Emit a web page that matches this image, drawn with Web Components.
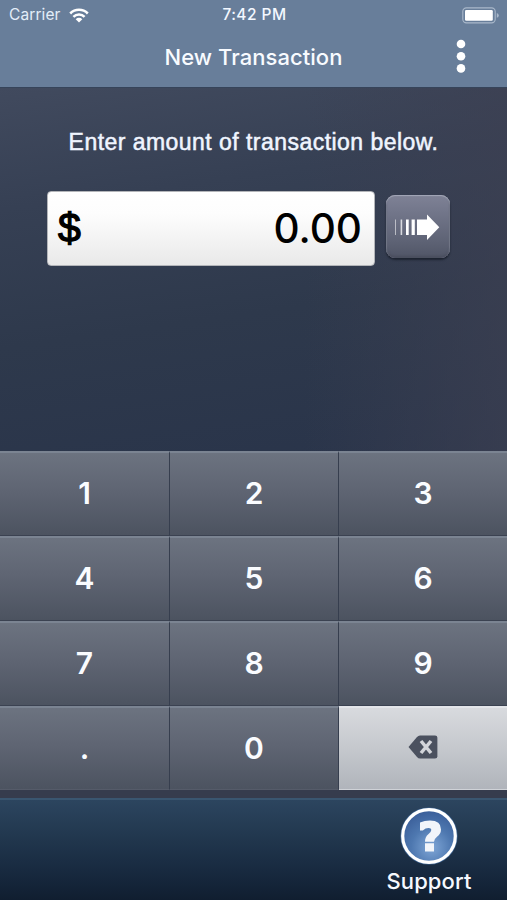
<!DOCTYPE html>
<html lang="en">
<head>
<meta charset="utf-8">
<title>New Transaction</title>
<style>
html, body { margin: 0; height: 100%; }
body { font-family: Inter, "Liberation Sans", sans-serif; color: #fff; overflow: hidden; }
</style>
</head>
<body>
<transaction-app></transaction-app>
<script>
const define = (name, html) => customElements.define(name, class extends HTMLElement {
  constructor() {
    super();
    const t = document.createElement('template');
    t.innerHTML = html;
    this.attachShadow({ mode: 'open' }).append(t.content.cloneNode(true));
  }
});

define('status-bar', `
<style>
:host { display: grid; grid-template-columns: 1fr auto 1fr; align-items: center; height: 30px; padding: 0 8px 0 9px; box-sizing: border-box; font-size: 15.5px; line-height: 30px; }
.left { display: flex; align-items: center; gap: 8px; color: #e3edf8; letter-spacing: .1px; }
.time { font-weight: 500; font-size: 15.5px; letter-spacing: .45px; color: #f3f8ff; padding-left: 1px; }
.batt { justify-self: end; }
svg { display: block; }
</style>
<div class="left"><span>Carrier</span>
<svg width="20" height="15" viewBox="0 0 20 15" fill="none" stroke="#fff" stroke-width="2.5"><path d="M1.2 5.500a12.400 12.400 0 0 1 17.600 0M4.400 8.800a7.900 7.900 0 0 1 11.200 0"/><path d="M6.700 11.200a4.700 4.700 0 0 1 6.600 0L10 14.500Z" fill="#fff" stroke="none"/></svg></div>
<span class="time">7:42 PM</span>
<svg class="batt" width="37" height="17" viewBox="0 0 37 17"><rect x=".8" y=".9" width="32.4" height="15" rx="3.6" fill="none" stroke="#a9b8ca" stroke-width="1.1"/><rect x="3" y="3" width="27.8" height="10.8" rx="1.3" fill="#fff"/><path d="M34.800 6v4.800q2-.8 2-2.400t-2-2.400" fill="#a9b8ca"/></svg>
`);

define('nav-bar', `
<style>
:host { display: grid; grid-template-columns: 1fr auto 1fr; align-items: center; height: 57px; box-sizing: border-box; padding-bottom: 1px; }
h1 { grid-column: 2; margin: -1px 0 0; font-size: 22px; font-weight: 550; line-height: 57px; letter-spacing: .05px; color: #f8fbff; }
svg { justify-self: end; margin: -4px 41px 0 0; }
</style>
<h1><slot></slot></h1>
<svg width="10" height="34" viewBox="0 0 10 34" fill="#fff"><circle cx="5" cy="5" r="4.3"/><circle cx="5" cy="17.2" r="4.3"/><circle cx="5" cy="29.400" r="4.300"/></svg>
`);

define('amount-field', `
<style>
:host { display: flex; justify-content: space-between; align-items: center; width: 328px; height: 75px; box-sizing: border-box; padding: 0 12px 0 10px; border: 1px solid #b3b5b9; border-radius: 4px; background: linear-gradient(#fff, #fdfdfd 30%, #e9e9e9); color: #000; font-size: 40.5px; font-weight: 550; line-height: 73px; }
.sign { font-family: "Liberation Sans", sans-serif; font-weight: 400; font-size: 41px; -webkit-text-stroke: 1.3px #000; }
</style>
<span class="sign">$</span><span><slot></slot></span>
`);

define('go-button', `
<style>
:host { display: block; width: 64px; height: 63px; border-radius: 9px; background: linear-gradient(#7f8296, #73778b 25%, #5d6274 75%, #505566); box-shadow: 0 2px 2px #1d2330, inset 0 1px 1px #a5a8b8, inset 0 -2px 2px #4a4e5e, inset 1px 0 1px #7c8092, inset -1px 0 1px #7c8092; }
svg { display: block; }
</style>
<svg width="64" height="63" viewBox="0 0 64 63" fill="#fff"><path d="M9 24.500h1v15.500H9z" opacity=".55"/><path d="M14.600 24.500h1.600v15.500h-1.600z" opacity=".75"/><path d="M20 24.500h2.700v15.500H20z"/><path d="M25.600 24.500h3.200v15.500h-3.200zM31 24.500h10v-5L53.300 32.200 41 45v-5H31z"/></svg>
`);

define('pad-key', `
<style>
:host { display: flex; align-items: center; justify-content: center; box-sizing: border-box; border-top: 2px solid #7b8492; border-right: 1px solid #363e4e; border-bottom: 1px solid #3b4251; background: linear-gradient(#6c7380, #5f6573 45%, #4c5360); font-size: 30px; font-weight: 560; line-height: 80px; padding-bottom: 2px; color: #fafcff; }
:host([light]) { border-top-color: #e3e5e9; border-right: 0; border-bottom-color: #cfd2d7; background: linear-gradient(#d8dade, #c5c8cd 50%, #b0b4bb); }
:host([edge]) { border-right: 0; }
:host([low]) { border-bottom-color: #555b69; }
</style>
<slot></slot>
`);

define('delete-icon', `
<style>:host { display: block; margin-top: -2px; } svg { display: block; }</style>
<svg width="30" height="24" viewBox="0 0 30 24"><path d="M.5 12 9 2Q10.300.5 12 .5h15q2.400 0 2.400 2.200v18.600q0 2.200-2.400 2.200H12q-1.700 0-3-1.500Z" fill="#4b515f"/><path d="m13 6 10 12m0-12-10 12" stroke="#d3d5da" stroke-width="3.500" fill="none"/></svg>
`);

define('number-pad', `
<style>
:host { display: grid; grid-template-columns: 170px 169px 168px; grid-template-rows: 85px 85px 85px 84px; }
</style>
<pad-key>1</pad-key><pad-key>2</pad-key><pad-key edge>3</pad-key>
<pad-key>4</pad-key><pad-key>5</pad-key><pad-key edge>6</pad-key>
<pad-key>7</pad-key><pad-key>8</pad-key><pad-key edge>9</pad-key>
<pad-key low>.</pad-key><pad-key low>0</pad-key><pad-key light><delete-icon></delete-icon></pad-key>
`);

define('support-button', `
<style>
:host { display: flex; flex-direction: column; align-items: center; width: 100px; }
svg { display: block; }
span { font-size: 22px; font-weight: 550; line-height: 30px; color: #f6f9ff; letter-spacing: .1px; }
</style>
<svg width="60" height="60" viewBox="0 0 60 60">
<defs><radialGradient id="g" cx=".55" cy=".72" r=".7"><stop offset="0" stop-color="#7fa6d6"/><stop offset=".55" stop-color="#4e78b0"/><stop offset="1" stop-color="#3b5f9a"/></radialGradient></defs>
<circle cx="30" cy="30" r="28.600" fill="#3f6797"/><circle cx="30" cy="30" r="26.300" fill="url(#g)" stroke="#fff" stroke-width="3.200"/>
<path d="M21 16.500Q25.500 14.600 31 14.600 42 14.600 42 23.400 42 27.700 38 30.700 35 33 35 35.800H26Q25.800 31.200 29.300 28.200 32.300 25.700 32.300 24 32.300 22 29.500 22 26.500 22 23.800 24.400H21ZM26 37.200h9V45.600h-9Z" fill="#f2f5fa"/></svg>
<span>Support</span>
`);

define('tool-bar', `
<style>
:host { display: flex; justify-content: flex-end; height: 102px; box-sizing: border-box; border-top: 2px solid #3a5670; padding: 6px 28px 0 0; background: linear-gradient(#2c455f, #22384f 35%, #182a40 70%, #101e30); }
</style>
<slot></slot>
`);

define('transaction-app', `
<style>
:host { display: flex; flex-direction: column; width: 507px; height: 900px; background: #363c4d; }
header { background: #687e9a; height: 87px; }
main { flex: none; height: 364px; box-sizing: border-box; border-top: 1px solid #36445a; background: linear-gradient(90deg, #3d405200 60%, #3d4052b0 100%), linear-gradient(172deg, #414a5e, #364054 28%, #2e394c 60%, #29344a); }
p { margin: 39px 0 0; text-align: center; font: 23px/30px "Liberation Sans", sans-serif; letter-spacing: .46px; color: #f0f5ff; -webkit-text-stroke: .5px #f0f5ff; }
.row { display: flex; gap: 11px; padding: 34px 0 0 47px; }
go-button { margin-top: 4px; }
number-pad { height: 339px; margin-bottom: 8px; flex: none; }
</style>
<header><status-bar></status-bar><nav-bar>New Transaction</nav-bar></header>
<main><p>Enter amount of transaction below.</p>
<div class="row"><amount-field>0.00</amount-field><go-button></go-button></div></main>
<number-pad></number-pad>
<tool-bar><support-button></support-button></tool-bar>
`);
</script>
</body>
</html>
